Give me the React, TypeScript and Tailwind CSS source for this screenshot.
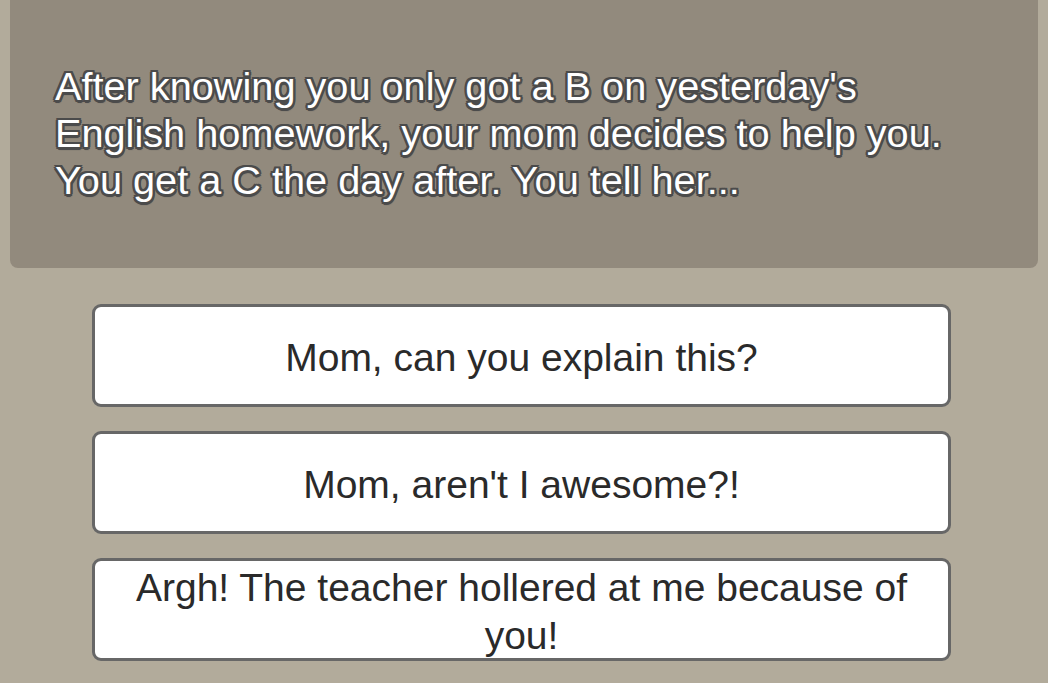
import React from 'react';

const choices = [
  'Mom, can you explain this?',
  "Mom, aren't I awesome?!",
  'Argh! The teacher hollered at me because of you!',
];

export default function App() {
  return (
    <div className="w-[1048px] h-[683px] overflow-hidden bg-[#b2ab9b] font-['Liberation_Sans',Arial,sans-serif]">
      {/* Question panel */}
      <div className="mx-[10px] h-[268px] rounded-b-[8px] bg-[#928a7d] flex items-center px-[45px] pb-[2px]">
        <p className="text-[39.7px] leading-[47px] text-white [text-shadow:-2px_-2px_0_#4b4b4b,2px_-2px_0_#4b4b4b,-2px_2px_0_#4b4b4b,2px_2px_0_#4b4b4b,0_2.5px_0_#4b4b4b,0_-2.5px_0_#4b4b4b,2.5px_0_0_#4b4b4b,-2.5px_0_0_#4b4b4b,1px_3px_1px_#555]">
          After knowing you only got a B on yesterday's
          <br />
          English homework, your mom decides to help you.
          <br />
          You get a C the day after. You tell her...
        </p>
      </div>

      {/* Answers */}
      <div className="flex flex-col gap-[24px] mt-[36px] mx-[92px] w-[859px]">
        {choices.map((c) => (
          <button
            key={c}
            className="h-[103px] rounded-[9px] border-[3px] border-[#676767] bg-white flex items-center justify-center px-[30px] pt-[4px] text-[39px] leading-[48px] text-[#2a2a2a] text-center"
          >
            {c}
          </button>
        ))}
      </div>
    </div>
  );
}
